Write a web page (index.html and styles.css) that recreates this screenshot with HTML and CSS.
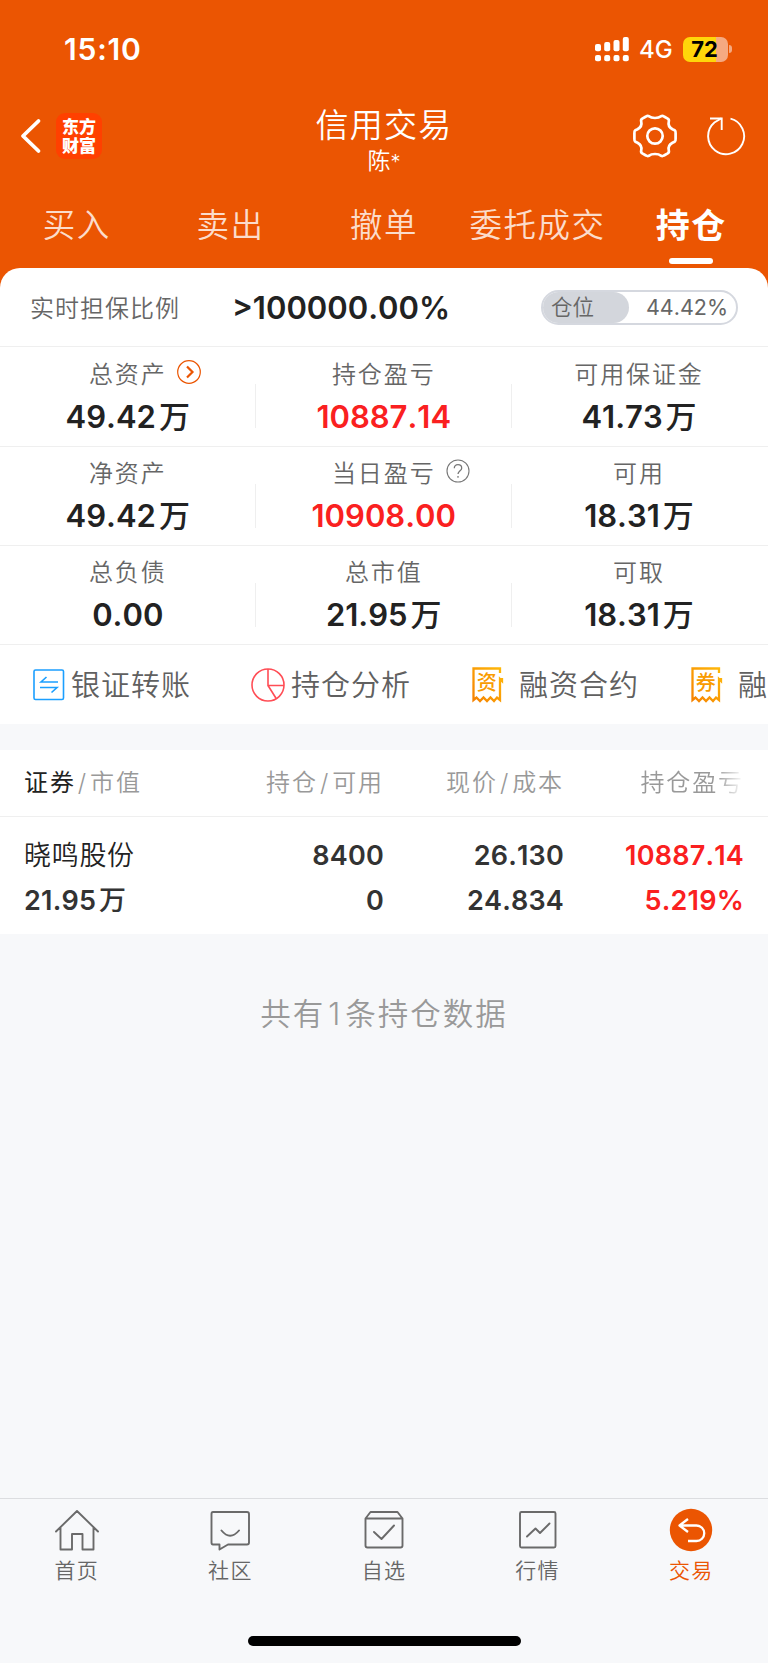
FILE: index.html
```html
<!DOCTYPE html>
<html lang="zh-CN">
<head>
<meta charset="utf-8">
<title>信用交易</title>
<link rel="stylesheet" href="styles.css">
</head>
<body>
<div class="app">
  <header class="top">
    <div class="status">
      <span class="clock">15:10</span>
      <div class="status-right">
        <svg class="signal" width="34" height="25" viewBox="0 0 34 25" fill="#fff">
          <rect x="0" y="7" width="6" height="7.300" rx="2"/><rect x="9.200" y="5" width="6" height="9.300" rx="2"/><rect x="18.500" y="3" width="6" height="11.300" rx="2"/><rect x="27.800" y="0" width="6" height="14.300" rx="2"/>
          <rect x="0" y="18" width="6" height="6.300" rx="2"/><rect x="9.200" y="18" width="6" height="6.300" rx="2"/><rect x="18.500" y="18" width="6" height="6.300" rx="2"/><rect x="27.800" y="18" width="6" height="6.300" rx="2"/>
        </svg>
        <span class="net">4G</span>
        <div class="battery">72</div>
        <div class="battery-tip"></div>
      </div>
    </div>
    <div class="nav">
      <div class="nav-left">
        <svg width="22" height="36" viewBox="0 0 22 36" fill="none" stroke="#fff" stroke-width="3.800" stroke-linecap="round" stroke-linejoin="round"><path d="M18.500 3 3 18 18.500 33"/></svg>
        <div class="logo"><span>东方</span><span>财富</span></div>
      </div>
      <div class="nav-title"><h1>信用交易</h1><p>陈<u>*</u></p></div>
      <div class="nav-right">
        <svg width="46" height="46" viewBox="-23 -23 46 46" fill="none" stroke="#fff" stroke-width="2.700" stroke-linejoin="round">
          <path d="M0-18Q4-18 6-19.800Q7.500-20.500 9-19.500L12.700-17.300Q14.300-16.300 13.800-14.500Q12.500-9.500 17.500-6.800L19.600-5.800Q20.800-5 20.600-3V3Q20.800 5 19.600 5.800L17.500 6.800Q12.500 9.500 13.800 14.500Q14.300 16.300 12.700 17.300L9 19.500Q7.500 20.500 6 19.800Q4 18 0 18Q-4 18-6 19.800Q-7.500 20.500-9 19.500L-12.700 17.300Q-14.300 16.300-13.800 14.500Q-12.500 9.500-17.500 6.800L-19.600 5.800Q-20.800 5-20.600 3V-3Q-20.800-5-19.600-5.800L-17.500-6.800Q-12.500-9.500-13.800-14.500Q-14.300-16.300-12.700-17.300L-9-19.500Q-7.500-20.500-6-19.800Q-4-18 0-18Z"/><circle r="7.700"/>
        </svg>
        <svg class="refresh" width="42" height="42" viewBox="-21 -21 42 42" fill="none" stroke="#fff" stroke-width="1.900"><path d="M4.500-17.300A18 18 0 1 1-11.600-13.500L-4.500-17.800"/><path d="M-16-17.500H-4.300V-6"/></svg>
      </div>
    </div>
    <nav class="tabs">
      <span>买入</span><span>卖出</span><span>撤单</span><span>委托成交</span><span class="on">持仓</span>
    </nav>
  </header>

  <main>
    <section class="panel">
      <div class="ratio">
        <span class="ratio-label">实时担保比例</span>
        <span class="ratio-value">&gt;100000.00%</span>
        <div class="pill"><span class="pill-fill">仓位</span><span class="pill-value">44.42%</span></div>
      </div>
      <div class="stats">
        <div class="stat"><span class="k">总资产<svg class="mark" width="24" height="24" viewBox="0 0 24 24" fill="none" stroke="#eb5502"><circle cx="12" cy="12" r="11.300" stroke-width="1.200"/><path d="M10 6.500 15.500 12 10 17.500" stroke-width="2.200"/></svg></span><b>49.42<i>万</i></b></div>
        <div class="stat"><span class="k">持仓盈亏</span><b class="red">10887.14</b></div>
        <div class="stat"><span class="k">可用保证金</span><b>41.73<i>万</i></b></div>
        <div class="stat"><span class="k">净资产</span><b>49.42<i>万</i></b></div>
        <div class="stat"><span class="k">当日盈亏<svg class="mark" width="24" height="24" viewBox="0 0 24 24" fill="none" stroke="#777"><circle cx="12" cy="12" r="11" stroke-width="1.100"/><path d="M8.300 9.300Q8.300 5.700 12 5.700T15.700 9.200C15.700 11.500 12 12 12 15M12 17V18.800" stroke-width="1.300"/></svg></span><b class="red">10908.00</b></div>
        <div class="stat"><span class="k">可用</span><b>18.31<i>万</i></b></div>
        <div class="stat"><span class="k">总负债</span><b>0.00</b></div>
        <div class="stat"><span class="k">总市值</span><b>21.95<i>万</i></b></div>
        <div class="stat"><span class="k">可取</span><b>18.31<i>万</i></b></div>
      </div>
      <div class="tools">
        <div class="tool t1"><svg width="32" height="32" viewBox="0 0 32 32" fill="none" stroke="#1b9fff" stroke-width="1.600"><rect x="1" y="1" width="29.500" height="29.500" rx="1.500"/><path d="M25 13H8L13.500 8M7 18.500H24L18.500 23.500"/></svg><span>银证转账</span></div>
        <div class="tool t2"><svg width="34" height="34" viewBox="0 0 34 34" fill="none" stroke="#ff4d55" stroke-width="1.600"><circle cx="17" cy="17" r="16"/><path d="M17 1V17.500H33M17 17.500 25.500 31"/></svg><span>持仓分析</span></div>
        <div class="tool t3"><svg width="32" height="36" viewBox="0 0 32 36"><defs><linearGradient id="gold" x1="1" y1="0" x2="0" y2="1"><stop offset="0" stop-color="#ffb90a"/><stop offset="1" stop-color="#f58200"/></linearGradient></defs><path d="M28 6V1.500H1.500V33L4.500 30.500 8 34 11.500 30.500 15 34 18.500 30.500 22 34 25 30.500 28 33V12L30 14V11" fill="none" stroke="url(#gold)" stroke-width="2.300"/><text x="14.700" y="23.300" class="glyph">资</text></svg><span>融资合约</span></div>
        <div class="tool t4"><svg width="32" height="36" viewBox="0 0 32 36"><path d="M28 6V1.500H1.500V33L4.500 30.500 8 34 11.500 30.500 15 34 18.500 30.500 22 34 25 30.500 28 33V12L30 14V11" fill="none" stroke="url(#gold)" stroke-width="2.300"/><text x="14.700" y="23.300" class="glyph">券</text></svg><span>融</span></div>
      </div>
    </section>

    <section class="holdings">
      <div class="row head"><span><em>证券</em><u>/</u>市值</span><span>持仓<u>/</u>可用</span><span>现价<u>/</u>成本</span><span class="fade">持仓盈亏</span></div>
      <div class="row item">
        <div><span class="name">晓鸣股份</span><b>21.95<i>万</i></b></div>
        <div><b>8400</b><b>0</b></div>
        <div><b>26.130</b><b>24.834</b></div>
        <div class="red"><b>10887.14</b><b>5.219%</b></div>
      </div>
    </section>
    <p class="count">共有<u>1</u>条持仓数据</p>
  </main>

  <footer>
    <nav class="dock">
      <div><svg width="46" height="44" viewBox="0 0 46 44"><path d="M2 23.500 23 3 44 23.500M6.500 19.500V41.500H18V26H28.500V41.500H39.500V19.500"/></svg><span>首页</span></div>
      <div><svg width="46" height="44" viewBox="0 0 46 44"><path d="M6 4H40Q42 4 42 6V34.500Q42 36.500 40 36.500H21L12.500 41.500V36.500H6Q4.500 36.500 4.500 34.500V6Q4.500 4 6 4ZM14.500 22.500Q23 33 32 22.500"/></svg><span>社区</span></div>
      <div><svg width="46" height="44" viewBox="0 0 46 44"><path d="M4.500 10.500 9.500 4H36.500L41.500 10.500V37.500Q41.500 39.500 39.500 39.500H6.500Q4.500 39.500 4.500 37.500ZM4.500 10.500H41.500M13 24 20.500 31 33 17.500"/></svg><span>自选</span></div>
      <div><svg width="46" height="44" viewBox="0 0 46 44"><rect x="5" y="4" width="35.500" height="35.500" rx="1.500"/><path d="M12 28.500 20.500 20.500 25 25 34.500 15.500"/></svg><span>行情</span></div>
      <div class="on"><svg width="46" height="44" viewBox="0 0 46 44"><circle cx="23" cy="22" r="21.200"/><path d="M20 11 11.500 17.500 20 24M11.500 17.500H28.500A7.500 7.500 0 0 1 28.500 33H20"/></svg><span>交易</span></div>
    </nav>
    <div class="home"></div>
  </footer>
</div>
</body>
</html>
```

FILE: styles.css
```css
* { box-sizing: border-box; margin: 0; padding: 0; }
body { font-family: Inter, "Noto Sans CJK SC", sans-serif; font-kerning: none; background: #f7f8fa; color: #222; }
i, em, u { font-style: normal; text-decoration: none; }
svg { display: block; flex: none; }
.app { width: 768px; height: 1663px; display: flex; flex-direction: column; overflow: hidden; }
.red, .red b, .stat .red { color: #fa2020; }

.top { background: #eb5502; height: 292px; flex: none; color: #fff; }
.status { height: 98px; display: flex; justify-content: space-between; padding: 0 36px 0 64px; }
.clock { font-size: 30px; font-weight: 600; line-height: 99px; letter-spacing: .800px; }
.status-right { display: flex; align-items: center; }
.signal { margin-right: 10px; }
.net { font-size: 24px; line-height: 98px; font-weight: 450; width: 44px; padding-top: 2px; }
.battery { width: 45px; height: 25px; border-radius: 7px; background: linear-gradient(90deg, #ffd60a 73%, #f5a981 73%); color: #000; font-size: 22px; font-weight: 700; line-height: 25px; text-align: center; padding-right: 2px; }
.battery-tip { width: 3px; height: 8px; margin-left: 1px; border-radius: 0 3px 3px 0; background: #f5a981; }

.nav { height: 94px; display: flex; justify-content: space-between; align-items: flex-start; padding: 0 20px; }
.nav-left, .nav-right { width: 200px; display: flex; align-items: center; height: 76px; }
.nav-left { gap: 14px; }
.nav-right { justify-content: flex-end; gap: 27px; }
.refresh { margin-right: 1px; }
.logo { width: 46px; height: 46px; border-radius: 9px; background: #ff4000; font-family: "Noto Sans CJK SC", sans-serif; font-weight: 900; font-size: 17px; line-height: 19px; display: flex; flex-direction: column; align-items: center; padding-top: 3px; }
.nav-title { text-align: center; padding-top: 7px; }
.nav-title h1 { font-size: 33px; font-weight: 350; letter-spacing: 1.300px; line-height: 40px; }
.nav-title p { font-size: 23px; line-height: 32px; font-weight: 350; }
.nav-title u { font-size: 20px; }

.tabs { display: grid; grid-template-columns: repeat(5, 1fr); height: 76px; }
.tabs span { font-size: 32.500px; letter-spacing: 1.500px; line-height: 67px; text-align: center; color: #fbdccb; font-weight: 350; white-space: nowrap; }
.tabs .on { color: #fff; font-weight: 700; font-size: 34px; display: flex; flex-direction: column; align-items: center; }
.tabs .on::after { content: ""; width: 44px; height: 6px; border-radius: 3px; background: #fff; margin-top: -1px; }

main { flex: 1; margin-top: -24px; }
.panel { background: #fff; border-radius: 20px 20px 0 0; height: 456px; }
.ratio { height: 79px; border-bottom: 1px solid #efefef; display: flex; align-items: center; padding: 0 30px; }
.ratio-label { font-size: 24px; letter-spacing: 1px; font-weight: 350; color: #666; width: 202px; padding-bottom: 2px; }
.ratio-value { font-size: 31px; font-weight: 600; flex: 1; line-height: 79px; white-space: nowrap; padding-top: 1px; }
.pill { width: 197px; height: 35px; border: 2px solid #d5d8df; border-radius: 18px; display: flex; line-height: 31px; color: #666; font-size: 21.500px; background: #fff; }
.pill-fill { background: #d3d6dc; border-radius: 16px; width: 86px; padding-left: 8px; font-weight: 350; line-height: 30px; }
.pill-value { flex: 1; text-align: right; padding-right: 8px; }

.stats { display: grid; grid-template-columns: 255.500px 256.500px 256px; grid-template-rows: 100px 99px 99px; }
.stat { border-bottom: 1px solid #efefef; padding-top: 8px; display: flex; flex-direction: column; align-items: center; background: linear-gradient(#efefef, #efefef) 100% 37px / 1px 44px no-repeat; }
.stat:nth-child(3n) { background: none; padding-right: 2px; }
.stat:nth-child(n+4) { padding-top: 7px; }
.k { position: relative; font-size: 24px; letter-spacing: 1.900px; line-height: 40px; font-weight: 350; color: #666; }
.mark { position: absolute; left: calc(100% + 10px); top: 5px; }
.stat b { font-size: 31px; font-weight: 600; line-height: 40px; padding-top: 2px; }
b i { margin-left: 3px; font-weight: 500; }

.tools { display: flex; height: 79px; align-items: center; overflow: hidden; padding-left: 33px; }
.tool { display: flex; align-items: center; flex: none; }
.tool span { font-size: 29px; letter-spacing: 1px; font-weight: 350; color: #606060; line-height: 40px; padding-top: 2px; }
.t1 { gap: 6px; width: 218px; }
.t2 { gap: 6px; width: 221px; }
.t3 { gap: 15px; width: 219px; }
.t4 { gap: 15px; }
.glyph { font-family: "Noto Sans CJK SC", sans-serif; font-size: 20px; font-weight: 500; fill: #f99b00; text-anchor: middle; }

.holdings { background: #fff; margin-top: 26px; height: 184px; }
.row { display: grid; grid-template-columns: 200px 184px 180px 180px; }
.row > :not(:first-child) { text-align: right; }
.row > :first-child { padding-left: 24px; }
.head { height: 67px; border-bottom: 1px solid #efefef; font-size: 24px; line-height: 65px; letter-spacing: 1.900px; font-weight: 350; color: #999; }
.head em { color: #222; font-weight: 400; }
.head u { margin: 0 2px; }
.head .fade { -webkit-mask-image: linear-gradient(90deg, #000 152px, transparent 180px); mask-image: linear-gradient(90deg, #000 152px, transparent 180px); }
.item { padding-top: 16px; color: #333; }
.item .name, .item b { display: block; line-height: 45px; font-size: 27px; }
.item .name { letter-spacing: .700px; font-weight: 350; color: #222; }
.item b { font-weight: 600; letter-spacing: .200px; }
.count { font-size: 30.500px; line-height: 44px; letter-spacing: 2px; font-weight: 350; color: #999; text-align: center; padding-top: 58px; }
.count u { margin: 0 3px; }

footer { height: 165px; flex: none; border-top: 1px solid #dcdde0; }
.dock { display: grid; grid-template-columns: repeat(5, 1fr); height: 137px; padding-top: 9px; }
.dock div { display: flex; flex-direction: column; align-items: center; gap: 3px; }
.dock svg { fill: none; stroke: #6a6a6a; stroke-width: 1.900; stroke-linejoin: round; stroke-linecap: round; }
.dock span { font-size: 21px; letter-spacing: 1.300px; line-height: 32px; font-weight: 350; color: #666; }
.dock .on span { color: #eb5502; }
.dock .on circle { fill: #eb5502; stroke: none; }
.dock .on path { stroke: #fff; stroke-width: 2.300; stroke-linecap: butt; }
.home { width: 273px; height: 10px; border-radius: 5px; background: #000; margin: 0 auto; }
```
